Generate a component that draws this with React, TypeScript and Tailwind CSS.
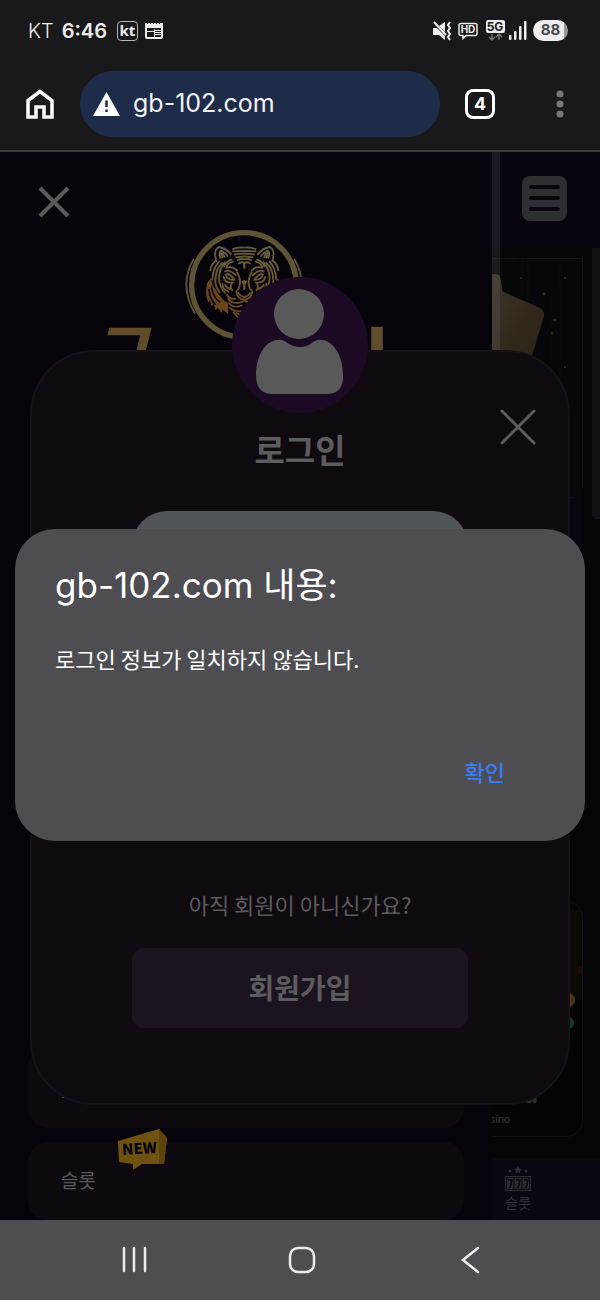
const sans = "font-['Inter','Noto_Sans_CJK_KR',sans-serif]"
const korean = "font-['Noto_Sans_CJK_KR',sans-serif]"

const StatusBar = () => (
  <div className="flex h-[61px] items-center justify-between pl-7 pr-8 text-[#ededed]">
    <div className="flex items-center text-xl">
      <span className="font-light">KT</span>
      <span className="ml-2 text-xl font-semibold">6:46</span>
      <span className="ml-[10px] flex h-5 w-[21px] items-center justify-center rounded border border-[#b5b5b5] font-['Noto_Sans',sans-serif] text-[15px] leading-none font-bold">
        kt
      </span>
      <svg className="ml-1.5" width="20" height="18" viewBox="0 0 20 18">
        <path
          fill="#ededed"
          fillRule="evenodd"
          d="M1 1h2v1h1V1h2v1h1V1h2v1h1V1h2v1h1V1h2v1h1V1h3v14q0 2-2 2H3q-2 0-2-2zM3 6h14v9H3z"
        />
        <path fill="#ededed" d="M3 9h7v1H3zM10 7h1v8h-1zM11 8h6v1h-6zM11 10h6v1h-6zM11 12h6v1h-6z" />
      </svg>
    </div>
    <div className="flex items-center">
      <svg width="20" height="20" viewBox="0 0 20 20" fill="none" stroke="#ededed">
        <path fill="#ededed" stroke="none" d="M1 7h4l8 8v4l-6-5H1zM7 5l6-4v10z" />
        <path strokeWidth="2" d="M2 1l12 13" />
        <path strokeWidth="2" d="M18 1l-2 3 2 3-2 3 2 3-2 3 2 3" />
      </svg>
      <svg className="ml-1.5" width="20" height="18" viewBox="0 0 20 18">
        <path
          d="M3 1.500h14q2 0 2 2v8q0 2-2 2H8l-3 3v-3H3q-2 0-2-2v-8q0-2 2-2z"
          fill="none"
          stroke="#ededed"
          strokeWidth="1.500"
        />
        <text x="10" y="11" textAnchor="middle" fill="#ededed" fontSize="10" fontWeight="700">
          HD
        </text>
      </svg>
      <svg className="ml-2" width="19" height="21" viewBox="0 0 19 21">
        <rect x="0" y="0" width="19" height="13" rx="2" fill="#ededed" />
        <text x="9" y="11" textAnchor="middle" fill="#19191b" fontSize="12" fontWeight="700">
          5G
        </text>
        <path
          d="M6 14v6M3 17l3 3 3-3M13 20v-6M10 17l3-3 3 3"
          fill="none"
          stroke="#77777a"
          strokeWidth="1.400"
        />
      </svg>
      <svg className="ml-1" width="18" height="19" viewBox="0 0 18 19" fill="#ededed">
        <rect x="0" y="14" width="2.500" height="5" rx="1" />
        <rect x="5" y="10" width="2.500" height="9" rx="1" />
        <rect x="10" y="5" width="2.500" height="14" rx="1" />
        <rect x="15" y="0" width="2.500" height="19" rx="1" />
      </svg>
      <span className="ml-1.5 flex h-[21px] w-[35px] items-center justify-center rounded-full bg-linear-to-r from-[#ededed] from-88% to-[#98989a] to-88% text-[15px] font-bold text-[#4a4a4c]">
        88
      </span>
    </div>
  </div>
)

const BrowserBar = () => (
  <header className="bg-[#19191b]">
    <StatusBar />
    <div className="flex h-[91px] items-center border-b-2 border-[#3a393f] pb-[3px] pl-6 pr-[34px]">
      <button type="button" aria-label="홈">
        <svg width="32" height="32" viewBox="0 0 32 32" fill="none" stroke="white" strokeWidth="3.500">
          <path d="M4 12.500 16 3.500 28 12.500V29H20V19H12V29H4z" />
        </svg>
      </button>
      <button
        type="button"
        className="ml-6 flex h-[66px] flex-1 items-center rounded-full bg-[#1f2c49] pl-[13px] text-[25px] text-[#f2f3f5]"
      >
        <svg width="27" height="24" viewBox="0 0 27 24">
          <path d="M13.500 0 27 24H0z" fill="white" />
          <path d="M13.500 8.500v6.500M13.500 17.500v2.500" stroke="#1f2c49" strokeWidth="2.500" />
        </svg>
        <span className="ml-[13px]">gb-102.com</span>
      </button>
      <button
        type="button"
        className="ml-[25px] flex size-[30px] items-center justify-center rounded-lg border-3 border-white text-lg leading-none font-bold text-white"
      >
        4
      </button>
      <button type="button" aria-label="메뉴" className="ml-[59px]">
        <svg width="12" height="30" viewBox="0 0 12 30" fill="#77777a">
          <circle cx="6" cy="5" r="3.500" />
          <circle cx="6" cy="15" r="3.500" />
          <circle cx="6" cy="25" r="3.500" />
        </svg>
      </button>
    </div>
  </header>
)

const GoldCards = () => (
  <svg className="h-full w-[92px]" viewBox="0 0 92 240" preserveAspectRatio="xMinYMin slice">
    <defs>
      <linearGradient id="card" x1="0" y1="0" x2="1" y2="1">
        <stop offset="0" stopColor="#3c3428" />
        <stop offset="0.500" stopColor="#312a1c" />
        <stop offset="1" stopColor="#292116" />
      </linearGradient>
    </defs>
    <rect width="92" height="240" fill="#060709" />
    <path d="M12 0v60M18 0v70M24 0v50M32 0v40M38 0v64M62 30v180M70 0v220" stroke="#0a0905" strokeWidth="2" />
    <path d="M0 15h6q4 0 5 6l4 34H0z" fill="#3a3220" />
    <path d="M0 27 50 49q5 3 4 8L38 110H0z" fill="url(#card)" />
    <g fill="#3c2b15">
      <circle cx="54" cy="35" r="1.500" />
      <circle cx="65" cy="61" r="1.500" />
      <circle cx="62" cy="74" r="1" />
      <circle cx="31" cy="19" r="1" />
      <circle cx="75" cy="108" r="1" />
      <circle cx="75" cy="19" r="1" />
    </g>
  </svg>
)

const SlotIcon = () => (
  <svg width="26" height="26" viewBox="0 0 26 26" fill="#2c2b30">
    <path d="M13 0l1.200 2.500 2.800.400-2 2 .500 2.700-2.500-1.300-2.500 1.300.500-2.700-2-2 2.800-.400z" />
    <circle cx="5" cy="5" r="1.500" />
    <circle cx="21" cy="5" r="1.500" />
    <rect x="0" y="10" width="26" height="15" />
    <g fill="none" stroke="#0a0711">
      <path d="M1.500 11.500h23v12h-23zM9 11v13M17 11v13" />
      <path strokeWidth="1.500" d="M3 14h4l-2 8M11 14h4l-2 8M19 14h4l-2 8" />
    </g>
  </svg>
)

const Page = () => (
  <>
    <div className="flex h-24 items-start justify-end bg-[#09050e] pt-6 pr-[33px]">
      <button type="button" aria-label="전체 메뉴" className="rounded-lg bg-[#2d2f32]">
        <svg width="45" height="45" viewBox="0 0 45 45" stroke="#09050e" strokeWidth="4" strokeLinecap="round">
          <path d="M9 11h27M9 22h27M9 33h27" />
        </svg>
      </button>
    </div>
    <div className="flex flex-1 justify-end bg-[#050507]">
      <div className="flex flex-1 flex-col pt-[10px]">
        <div className="flex h-60 justify-end rounded-br-xl border border-[#121316]">
          <GoldCards />
        </div>
        <div className="h-16 bg-[#07050e]" />
        <div className="mt-auto mb-[21px] flex h-[236px] flex-col items-end justify-end rounded-2xl border border-[#111114] bg-[#030405] pb-[5px]">
          <svg className="mb-auto mt-2" width="14" height="140" viewBox="0 0 14 140">
            <rect width="13" height="90" fill="#0c0805" />
            <path d="M3 0v90M8 0v90" stroke="#100a05" />
            <circle cx="13" cy="60" r="4" fill="#210909" />
            <circle cx="0" cy="90" r="7" fill="#4a3610" />
            <circle cx="0" cy="113" r="6" fill="#0d3c32" />
          </svg>
          <span className="pr-[44px] text-2xl leading-6 font-bold text-[#2c2c2e]">na</span>
          <span className="pr-[72px] font-['Liberation_Sans',sans-serif] text-[11px] leading-6 text-[#3a3a3c]">Casino</span>
        </div>
      </div>
      <div className="ml-[9px] h-[271px] w-2 rounded-bl bg-[#0f1114]" />
    </div>
    <div className="flex h-[62px] justify-end bg-[#0a0711] pt-2 pr-[69px]">
      <a href="#slot" className={`flex flex-col items-center text-sm text-[#343338] ${korean}`}>
        <SlotIcon />
        슬롯
      </a>
    </div>
  </>
)

// left half of the face, mirrored for the right one
const TigerHalf = () => (
  <>
    <path
      d="M80 188Q73 222 84 248l5-8 4 18 7-7 6 18 7-7 10 15 4-9 16 12V248Q122 238 112 212 94 200 92 174z"
      fill="#6a451c"
      stroke="none"
    />
    <path d="M94 200Q98 232 118 244M86 208Q88 234 104 252M106 190Q108 220 132 234" stroke="#08060a" strokeWidth="5" />
    <path d="M108 122Q98 88 116 80 138 84 152 102M120 112Q114 96 122 91 134 96 142 107M126 112l-4-14M132 110l-4-10" />
    <path d="M158 86Q174 80 190 82M158 93 191 92M163 102 191 100M167 111 191 108M172 119Q182 114 191 117M176 129Q184 123 191 128M192 128v14" />
    <path d="M106 122Q92 132 90 150M116 124Q98 144 96 178M126 128Q106 144 105 182 106 202 118 216M134 126Q116 146 116 176 118 200 134 218" />
    <path d="M154 118Q136 124 132 138M158 124Q142 128 138 140M138 142Q156 136 170 150M134 154Q144 144 166 164" />
    <path d="M136 164Q142 180 162 178 156 168 142 160zM130 170Q132 190 158 186" />
    <path d="M126 190Q126 206 144 214M134 194Q140 204 152 206M154 190Q148 200 156 210" />
    <path d="M170 156Q182 176 178 196 176 206 168 214M168 214Q172 238 192 238M174 218Q180 228 190 230M192 182v24M186 184l6 8" />
    <path d="M140 224Q146 236 164 236M144 236Q154 252 180 246 190 244 192 238M146 248Q158 264 184 256M148 262Q162 276 192 272M160 276Q174 298 192 298M168 278Q180 286 192 286" />
  </>
)

const TigerLogo = () => (
  <svg width="118" height="112" viewBox="14 26 354 336" fill="none">
    <defs>
      <linearGradient id="fur" x1="0" y1="80" x2="0" y2="290" gradientUnits="userSpaceOnUse">
        <stop offset="0" stopColor="#625c42" />
        <stop offset="0.400" stopColor="#6b5b35" />
        <stop offset="1" stopColor="#6c421c" />
      </linearGradient>
    </defs>
    <circle cx="191" cy="194" r="157" stroke="#5c5434" strokeWidth="16" />
    <path d="M40 116Q-6 194 44 280M342 116Q388 194 338 280" stroke="#565036" strokeWidth="6" />
    <g stroke="url(#fur)" strokeWidth="5.500" strokeLinecap="round">
      <TigerHalf />
      <g transform="translate(384 0) scale(-1 1)">
        <TigerHalf />
      </g>
    </g>
  </svg>
)

const Drawer = () => (
  <aside className="absolute inset-y-0 left-0 flex w-[82%] flex-col bg-[#06040a] px-7">
    <div className="flex pt-[34px] pl-[10px]">
      <button type="button" aria-label="메뉴 닫기">
        <svg width="32" height="32" viewBox="0 0 32 32" stroke="#5b5b5d" strokeWidth="4">
          <path d="M2 2l28 28M30 2 2 30" />
        </svg>
      </button>
    </div>
    <div className="mt-[11px] flex flex-col items-center pr-1">
      <TigerLogo />
      <div className={`-mt-[35px] flex w-[332px] justify-between pl-2 text-7xl text-[#5f4d29] ${korean}`}>
        <span className="leading-[72px] font-bold italic">ㄱ</span>
        <span className="leading-[100px] font-black">ㅣ</span>
      </div>
    </div>
    <nav className={`mt-auto flex flex-col gap-[14px] text-[19px] text-[#5b595c] ${korean}`}>
      <div className="flex h-20 items-end rounded-[20px] bg-[#0e090f] pb-[30px] pl-[34px]">
        <span className="size-[2px] rounded-full bg-[#5b595c]" />
      </div>
      <a href="#slot" className="relative flex h-[78px] items-center rounded-[20px] bg-[#0e090f] pb-[2px] pl-[33px]">
        슬롯
        <svg className="absolute -top-[14px] left-[89px]" width="52" height="43" viewBox="0 0 52 43">
          <path d="M1 13 42 1l8 9-3 26H25l-9 6v-6L2 34z" fill="#6f5210" />
          <path d="M42 1l8 9-3 26h-5z" fill="#5c430b" />
          <text x="5" y="26" fill="#050403" fontSize="15" fontWeight="800" transform="rotate(-3 22 22)">
            NEW
          </text>
        </svg>
      </a>
    </nav>
  </aside>
)

const LoginModal = () => (
  <div className="absolute inset-0 flex items-center justify-center px-[30px] pt-[10px]">
    <form
      className={`relative mt-[73px] flex w-full flex-col items-center rounded-[64px] border-2 border-[#161118] bg-[#0f0910] px-[100px] pb-[75px] text-[#5d5b5e] ${korean}`}
    >
      <svg className="-mt-[75px] rounded-full bg-[#1c0a25]" width="136" height="136" viewBox="0 0 136 136" fill="#595959">
        <circle cx="67" cy="37" r="25" />
        <path d="M24 98C24 78 34 64 45 63 54 61 56 70 68 70S81 61 90 63C101 64 111 78 111 98 112 110 106 117 95 117H41C29 117 24 110 24 98z" />
      </svg>
      <button type="button" aria-label="닫기" className="absolute top-[57px] right-8">
        <svg width="36" height="36" viewBox="0 0 36 36" stroke="#5d5b5e" strokeWidth="3" strokeLinecap="round">
          <path d="M2 2l32 32M34 2 2 34" />
        </svg>
      </button>
      <h2 className="mt-3 text-[33px] leading-12 font-bold">로그인</h2>
      <input aria-label="아이디" className="mt-[38px] h-[70px] w-full rounded-[35px] bg-[#50555a] px-6 outline-none" />
      <p className="mt-[307px] text-[22px] leading-8">아직 회원이 아니신가요?</p>
      <button type="button" className="mt-7 h-20 w-full rounded-xl bg-[#1b131e] pb-[2px] text-[28px] font-bold">
        회원가입
      </button>
    </form>
  </div>
)

const AlertDialog = () => (
  <div className="absolute inset-0 flex items-center px-[15px] pb-[2px]">
    <div role="alertdialog" className="flex w-full flex-col rounded-[40px] bg-[#4e4d52] px-10 pt-8 pb-[54px] text-white">
      <h1 className="text-[35px] leading-12">gb-102.com 내용:</h1>
      <p className={`mt-[33px] text-[22px] leading-8 ${korean}`}>로그인 정보가 일치하지 않습니다.</p>
      <button type="button" className={`mt-[81px] mr-10 self-end text-[22px] leading-8 font-medium text-[#3b7cf5] ${korean}`}>
        확인
      </button>
    </div>
  </div>
)

const NavBar = () => (
  <footer className="flex h-20 items-center justify-between bg-[#4e4d52] pr-[117px] pl-[119px]">
    <button type="button" aria-label="최근 앱">
      <svg width="30" height="30" viewBox="0 0 30 30" stroke="#ededed" strokeWidth="2.500" strokeLinecap="round">
        <path d="M5 3v23M15 3v23M26 3v23" />
      </svg>
    </button>
    <button type="button" aria-label="홈 화면">
      <svg width="34" height="30" viewBox="0 0 34 30" fill="none" stroke="#ededed" strokeWidth="2.500">
        <rect x="3" y="3" width="24" height="24" rx="8" />
      </svg>
    </button>
    <button type="button" aria-label="뒤로">
      <svg width="24" height="30" viewBox="0 0 24 30" fill="none" stroke="#ededed" strokeWidth="2.500" strokeLinecap="round">
        <path d="M19 3 4 15l15 12" />
      </svg>
    </button>
  </footer>
)

const App = () => {
  return (
    <div className={`flex min-h-screen flex-col bg-[#050507] ${sans}`}>
      <BrowserBar />
      <main className="relative flex flex-1 flex-col overflow-hidden">
        <Page />
        <Drawer />
        <div className="absolute top-0 left-[82%] h-1/3 w-2 bg-[#8f8da0]/15" />
        <LoginModal />
        <AlertDialog />
      </main>
      <NavBar />
    </div>
  )
}

export default App
